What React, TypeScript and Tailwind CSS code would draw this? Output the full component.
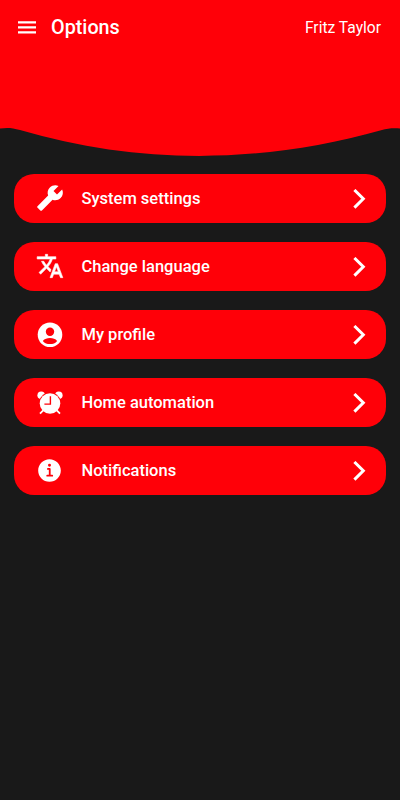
import type { ReactNode } from 'react';
import { MdBuild } from 'react-icons/md';
import { IoInformationCircle } from 'react-icons/io5';

type Option = { label: string; icon: ReactNode };

function TranslateIcon() {
  return (
    <svg className="mb-px size-7 shrink-0" viewBox="0 0 24 24" fill="currentColor" stroke="currentColor" strokeWidth="0.5">
      <path d="M12.870 15.070l-2.540-2.510.03-.03c1.740-1.940 2.980-4.170 3.710-6.530H17V4h-7V2H8v2H1v1.990h11.170C11.500 7.920 10.440 9.750 9 11.350 8.070 10.320 7.300 9.190 6.690 8h-2c.73 1.630 1.730 3.170 2.980 4.560l-5.090 5.020L4 19l5-5 3.110 3.110.76-2.040zM18.500 10h-2L12 22h2l1.120-3h4.750L21 22h2l-4.500-12zm-2.620 7l1.620-4.330L19.120 17h-3.240z" />
    </svg>
  );
}

function ProfileIcon() {
  return (
    <svg className="size-7 shrink-0" viewBox="0 0 28 28">
      <circle cx="14" cy="13.8" r="12.3" fill="currentColor" />
      <circle cx="14" cy="10.7" r="4.2" fill="#ff0008" />
      <path d="M6.800 19.900C8.600 17.900 11.100 17 14 17S19.400 17.900 21.200 19.900C19.400 22 16.900 23.100 14 23.100S8.600 22 6.800 19.900Z" fill="#ff0008" />
    </svg>
  );
}

function AlarmIcon() {
  return (
    <svg className="size-7 shrink-0" viewBox="0 0 28 28">
      <g fill="currentColor">
        <circle cx="5.200" cy="6.200" r="3.800" />
        <circle cx="22.800" cy="6.200" r="3.800" />
      </g>
      <circle cx="14" cy="14.500" r="11.100" fill="#ff0008" />
      <path d="M7.200 21.300L4 24.700M20.800 21.300L24 24.700" stroke="currentColor" strokeWidth="1.8" />
      <circle cx="14" cy="14.500" r="10.300" fill="currentColor" />
      <path d="M14.400 7.300V15.100H8.400" fill="none" stroke="#ff0008" strokeWidth="1.4" />
    </svg>
  );
}

const options: Option[] = [
  { label: 'System settings', icon: <MdBuild size={28} className="mb-0.5 -scale-x-100" /> },
  { label: 'Change language', icon: <TranslateIcon /> },
  { label: 'My profile', icon: <ProfileIcon /> },
  { label: 'Home automation', icon: <AlarmIcon /> },
  { label: 'Notifications', icon: <IoInformationCircle size={29} /> },
];

function OptionRow({ label, icon }: Option) {
  return (
    <button className="flex h-[49px] w-full items-center rounded-[20px] bg-[#ff0008] text-left text-white">
      <span className="ml-[21px] flex w-[29px] shrink-0 justify-center">{icon}</span>
      <span className="ml-[17.5px] grow text-[16.5px] leading-6 font-medium">{label}</span>
      <svg className="mr-5 h-5 w-[13px] shrink-0" viewBox="0 0 13 20" fill="none" stroke="currentColor" strokeWidth="3">
        <path d="M1.400 1L10.300 9.800L1.400 18.600" />
      </svg>
    </button>
  );
}

export default function App() {
  return (
    <div className="min-h-[800px] w-full bg-[#191919] font-[Roboto,sans-serif] text-white">
      <header className="flex h-[55px] items-center bg-[#ff0008] pr-[19px] pl-[18px]">
        <svg className="mb-px h-[13px] w-[18px]" viewBox="0 0 18 13" fill="currentColor">
          <path d="M0 0.200h18v2.200H0zM0 5.200h18v2.200H0zM0 10.200h18v2.200H0z" />
        </svg>
        <h1 className="ml-[15px] grow text-[19.8px] leading-6 font-medium">Options</h1>
        <span className="text-[15.6px] leading-6">Fritz Taylor</span>
      </header>
      <svg className="block h-[102px] w-full" viewBox="0 0 400 102" preserveAspectRatio="none">
        <path
          fill="#ff0008"
          d="M0 -1H400V73.5C393 73 387 73.5 382 75C260 109.500 137 109.500 20 75C12 72.700 7 72.500 0 73.500Z"
        />
      </svg>
      <main className="mt-[17px] flex flex-col gap-[19px] px-[14px]">
        {options.map((o) => (
          <OptionRow key={o.label} {...o} />
        ))}
      </main>
    </div>
  );
}
